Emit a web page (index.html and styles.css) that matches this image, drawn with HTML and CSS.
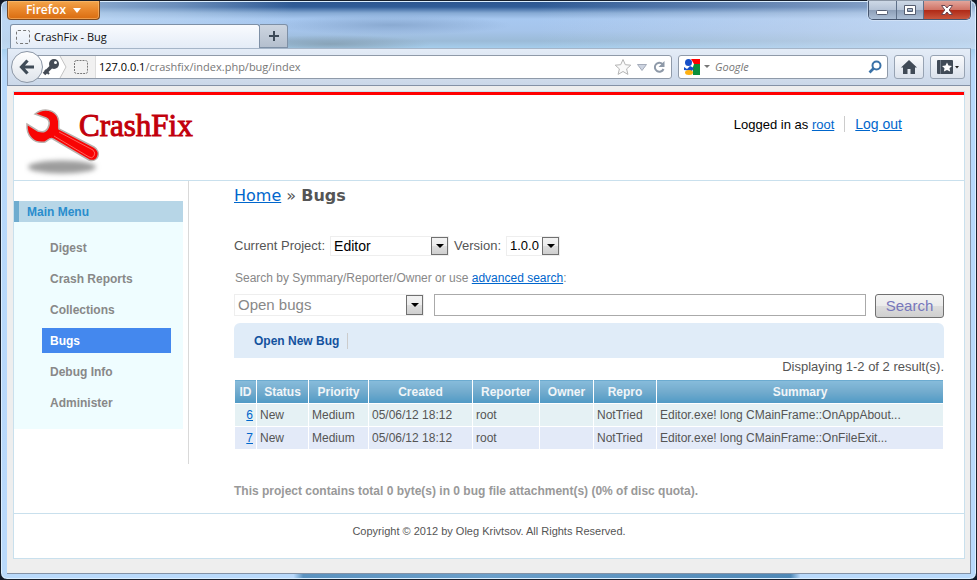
FILE: index.html
```html
<!DOCTYPE html>
<html lang="en">
<head>
<meta charset="utf-8">
<title>CrashFix - Bug</title>
<link rel="stylesheet" href="styles.css">
</head>
<body>
<div class="window">
  <div class="titlebar">
    <button class="firefox" type="button">Firefox <svg width="8" height="5" viewBox="0 0 8 5"><path d="M0 0h8L4 5z" fill="#fff"/></svg></button>
    <div class="controls">
      <button class="control" type="button" aria-label="Minimize"><svg width="14" height="12" viewBox="0 0 14 12"><rect x="1.500" y="6.500" width="11" height="4" rx="1" fill="#fff" stroke="#555d70"/></svg></button>
      <button class="control" type="button" aria-label="Maximize"><svg width="14" height="12" viewBox="0 0 14 12"><path d="M1.500 1.500h11v9h-11zM4.500 4.500v3h5v-3z" fill="#fff" stroke="#555d70" fill-rule="evenodd"/></svg></button>
      <button class="control close" type="button" aria-label="Close"><svg width="14" height="12" viewBox="0 0 14 12"><path d="M1.500 1.500h3.500l2 2.500 2-2.500h3.500L9.200 6l3.300 4.500H9L7 8l-2 2.500H1.500L4.800 6z" fill="#fff" stroke="#6b4650"/></svg></button>
    </div>
  </div>
  <div class="tabs">
    <div class="tab"><span class="blank-icon"></span><span>CrashFix - Bug</span></div>
    <button class="new-tab" type="button" aria-label="New tab"><svg width="12" height="12" viewBox="0 0 12 12"><path d="M6 1v10M1 6h10" stroke="#3d4a58" stroke-width="2"/></svg></button>
  </div>
  <div class="toolbar">
    <button class="back" type="button" aria-label="Back"><svg width="16" height="16" viewBox="0 0 16 16"><path d="M8.500 1.500L2.500 8l6 6.500M3 8h12" fill="none" stroke="#3f4b57" stroke-width="3.200"/></svg></button>
    <div class="urlbar">
      <svg class="identity" width="60" height="22" viewBox="0 0 60 22"><path d="M24 0h36v22H24l6-11z" fill="#f1f1f1"/><path d="M24 0l6 11-6 11" fill="none" stroke="#c4c4c4"/><path d="M59.500 0v22" stroke="#ddd"/><g stroke="#444b55"><path d="M16 10L8 18" stroke-width="3.500"/><path d="M9 14l4 4" stroke-width="2"/></g><circle cx="18" cy="8" r="5" fill="#444b55"/><circle cx="19.500" cy="6.500" r="1.500" fill="#fff"/><rect x="38.500" y="4.500" width="13" height="13" rx="2" fill="none" stroke="#777" stroke-dasharray="2 1"/></svg>
      <label class="host" for="url">127.0.0.1</label><input id="url" class="url" type="text" value="/crashfix/index.php/bug/index">
      <svg width="56" height="18" viewBox="0 0 56 18"><path d="M9 1.500l2.300 5.200 5.500.5-4.200 3.700 1.300 5.500L9 13.500l-4.900 2.900 1.300-5.500L1.200 7.200l5.500-.5z" fill="#fafafa" stroke="#b4b4b4"/><path d="M23.500 6.500h9l-4.500 6z" fill="#ccd3e0" stroke="#a5acba"/><path d="M48.500 6A4.500 4.500 0 1 0 49.500 11" fill="none" stroke="#8e99a8" stroke-width="2"/><path d="M50.500 3v6h-6z" fill="#8e99a8"/></svg>
    </div>
    <div class="searchbar">
      <svg width="28" height="18" viewBox="0 0 28 18"><path d="M8 1h9v5H11z" fill="#f00"/><path d="M11 6h6v11h-7V9z" fill="#0a8f3c"/><circle cx="5.500" cy="4.500" r="3.500" fill="#1650c8"/><path d="M1 9l3 2 3-3 4 2-2 3-8-1z" fill="#1650c8"/><ellipse cx="6" cy="14.500" rx="4" ry="2.500" fill="#ffb010"/><path d="M21 7h6l-3 3z" fill="#777"/></svg>
      <input class="web-search" type="text" placeholder="Google" aria-label="Google search">
      <svg width="14" height="14" viewBox="0 0 14 14"><circle cx="8.500" cy="5.500" r="4" fill="none" stroke="#3a72a8" stroke-width="2"/><path d="M5.500 8.500L1.500 12.500" stroke="#3a72a8" stroke-width="2.600"/></svg>
    </div>
    <button class="tool" type="button" aria-label="Home"><svg width="16" height="14" viewBox="0 0 16 14"><path d="M8 0L0 7.500h2V14h4.500V9h3v5H14V7.500h2z" fill="#414b57"/></svg></button>
    <button class="tool wide" type="button" aria-label="Bookmarks"><svg width="22" height="14" viewBox="0 0 22 14"><rect width="16" height="14" rx="1" fill="#414b57"/><path d="M3.500 0v14" stroke="#727c88"/><path d="M10 2.500l1.500 3 3.500.4-2.500 2.300.6 3.300-3.100-1.600-3.100 1.600.6-3.300L5 5.900l3.500-.4z" fill="#fff"/><path d="M18 6h4l-2 2.500z" fill="#222"/></svg></button>
  </div>

  <div class="viewport">
    <div class="page">
      <header class="header">
        <div class="logo">
          <svg class="wrench" width="80" height="76" viewBox="0 0 80 76">
            <defs><filter id="soft" x="-20%" y="-50%" width="140%" height="200%"><feGaussianBlur stdDeviation="2.500"/></filter></defs>
            <ellipse cx="38" cy="62" rx="34" ry="6.500" fill="#9c9c9c" filter="url(#soft)"/>
            <path d="M11 9C20 2 31 5 34 13C36 18 34 21 35 24L70 42C78 47 74 58 65 55L29 34C26 32 25 35 21 37C10 39 2 31 3 19L14 26Q23 29 25 20Q26 15 22 13Z" fill="#f80404" stroke="#b9b1ae" stroke-width="1.500"/>
            <path d="M35 27L69 45Q72 48 70 51Q68 54 65 52L30 31" fill="none" stroke="#ff7a70" stroke-width=".8"/>
          </svg>
          <span class="brand">CrashFix</span>
        </div>
        <div class="account"><span>Logged in as <a href="#root">root</a></span><a class="logout" href="#logout">Log out</a></div>
      </header>

      <div class="columns">
        <nav class="sidebar">
          <h2 class="menu-title">Main Menu</h2>
          <ul class="menu">
            <li><a href="#digest">Digest</a></li>
            <li><a href="#crash">Crash Reports</a></li>
            <li><a href="#collections">Collections</a></li>
            <li><a class="active" href="#bugs">Bugs</a></li>
            <li><a href="#debug">Debug Info</a></li>
            <li><a href="#admin">Administer</a></li>
          </ul>
        </nav>
        <main class="content">
          <div class="breadcrumbs"><a href="#home">Home</a> » <strong>Bugs</strong></div>
          <div class="project">
            <label for="project">Current Project:</label>
            <span class="select name"><select id="project"><option>Editor</option></select><i class="arrow"></i></span>
            <label for="version">Version:</label>
            <span class="select version"><select id="version"><option>1.0.0</option></select><i class="arrow"></i></span>
          </div>
          <div class="hint"><label for="query">Search by Symmary/Reporter/Owner or use</label> <a href="#advanced">advanced search</a>:</div>
          <form class="filter">
            <span class="select status"><select aria-label="Status"><option>Open bugs</option></select><i class="arrow"></i></span>
            <input id="query" class="query" type="text">
            <button class="submit" type="button">Search</button>
          </form>
          <div class="actions"><a href="#new">Open New Bug</a></div>
          <div class="summary">Displaying 1-2 of 2 result(s).</div>
          <table class="grid">
            <colgroup><col class="c-id"><col class="c-status"><col class="c-priority"><col class="c-created"><col class="c-reporter"><col class="c-owner"><col class="c-repro"><col></colgroup>
            <thead><tr><th>ID</th><th>Status</th><th>Priority</th><th>Created</th><th>Reporter</th><th>Owner</th><th>Repro</th><th>Summary</th></tr></thead>
            <tbody>
              <tr><td class="id"><a href="#6">6</a></td><td>New</td><td>Medium</td><td>05/06/12 18:12</td><td>root</td><td></td><td>NotTried</td><td>Editor.exe! long CMainFrame::OnAppAbout...</td></tr>
              <tr><td class="id"><a href="#7">7</a></td><td>New</td><td>Medium</td><td>05/06/12 18:12</td><td>root</td><td></td><td>NotTried</td><td>Editor.exe! long CMainFrame::OnFileExit...</td></tr>
            </tbody>
          </table>
          <p class="quota">This project contains total 0 byte(s) in 0 bug file attachment(s) (0% of disc quota).</p>
        </main>
      </div>
      <footer class="footer">Copyright © 2012 by Oleg Krivtsov. All Rights Reserved.</footer>
    </div>
  </div>
</div>
</body>
</html>
```
FILE: styles.css
```css
* { box-sizing: border-box; }
body { margin: 0; background: #101828; font: 12px/16px "Liberation Sans", sans-serif; color: #555; }
button, input, select { font: inherit; margin: 0; }
svg { display: block; flex: none; }
a { color: #06c; }

.window {
  display: flex; flex-direction: column; min-height: 100vh;
  padding: 0 5px 5px 6px; border: 1px solid #18202c; border-radius: 7px;
  box-shadow: inset 0 0 0 1px #dbeeff;
  background:
    linear-gradient(90deg, transparent 30%, #5b92bf 31%, #6b9fca 50%, #4f88b6 81%, transparent 82%) bottom / 100% 5px no-repeat,
    radial-gradient(ellipse 100px 9px at 330px 43px, #7d94a4aa, transparent),
    radial-gradient(ellipse 120px 10px at 390px 24px, #7c9cc4aa, transparent),
    linear-gradient(90deg, #c3dbf3cc 0, #c3dbf366 18%, transparent 30%, transparent 55%, #cfdcf066 82%, #cfe0f5aa) top / 100% 48px no-repeat,
    linear-gradient(#2d568f 0, #315d98 6px, #86aad4 12px, #a7c8f0 18px, #a5c4ea 30px, #9bbbd8 40px, #a7d0ef 48px, #b7d8fa 60px, #b9d9fb);
}

/* Browser frame */
.titlebar { display: flex; justify-content: space-between; align-items: flex-start; height: 23px; }
.firefox {
  display: flex; align-items: center; justify-content: center; gap: 7px; width: 93px; height: 19px; padding: 0;
  border: 1px solid #7c4a20; border-top: 0; border-radius: 0 0 4px 4px;
  background: linear-gradient(#f2a54c, #e9862a 50%, #d96c10); color: #fff;
  font: 600 12px/16px "Open Sans", sans-serif; box-shadow: inset 0 0 0 1px #ffc58088;
}
.controls { display: flex; width: 103px; height: 19px; border: 1px solid #46566f; border-top: 0; border-radius: 0 0 5px 5px; overflow: hidden; box-shadow: 0 0 0 1px #dceafa99; }
.control { display: flex; align-items: center; justify-content: center; flex: 27; padding: 0; border: 0; border-right: 1px solid #5d6f88; background: linear-gradient(#cdd8e6, #b5c3d6 48%, #8d9fb8 52%, #abbdd4); }
.control.close { flex: 46; border-right: 0; background: linear-gradient(#e2a59b, #d07466 48%, #b02a17 52%, #c8563d); }
.tabs { display: flex; align-items: stretch; height: 24px; padding-left: 3px; }
.tab {
  display: flex; align-items: center; gap: 4px; width: 250px; padding: 0 5px;
  border: 1px solid #7e90a6; border-bottom: 0; border-radius: 3px 3px 0 0;
  background: linear-gradient(#f9fbfe, #e4ecf7); color: #111; font: 11px/16px "Open Sans", sans-serif;
}
.blank-icon { width: 14px; height: 14px; border: 1px dashed #777; border-radius: 2px; }
.new-tab { display: flex; align-items: center; justify-content: center; width: 28px; padding: 0; border: 1px solid #7e90a6; border-left: 0; border-radius: 0 3px 0 0; background: linear-gradient(#cdd5e0, #b4bfce); }
.toolbar {
  display: flex; align-items: center; height: 37px; padding: 0 5px 0 3px;
  background: linear-gradient(#e4ecf7, #cbd8e9); border: 1px solid #8492a6; border-top-color: #a5b5c8; border-bottom: 0;
}
.back { z-index: 1; display: flex; align-items: center; justify-content: center; flex: none; width: 32px; height: 32px; padding: 0; border: 1px solid #8c97a6; border-radius: 50%; background: linear-gradient(#fff, #dfe4eb); }
.urlbar, .searchbar { display: flex; align-items: center; height: 24px; background: #fff; border: 1px solid #8f9aa9; border-radius: 3px; font: 11px/16px "Open Sans", sans-serif; }
.urlbar { flex: 1; min-width: 0; margin-left: -10px; padding: 0 1px 0 2px; }
.host { margin-left: 3px; color: #000; }
.url { flex: 1; min-width: 0; padding: 0; border: 0; outline: 0; background: none; color: #777; }
.searchbar { width: 210px; margin-left: 6px; padding: 0 5px 0 4px; gap: 4px; }
.web-search { flex: 1; min-width: 0; padding: 0; border: 0; background: none; font-style: italic; }
.web-search::placeholder { color: #777; opacity: 1; }
.tool { display: flex; align-items: center; justify-content: center; flex: none; width: 30px; height: 24px; margin-left: 6px; padding: 0; border: 1px solid #97a3b3; border-radius: 3px; background: linear-gradient(#f9fafc, #dbe2ec); }
.tool.wide { width: 35px; }

/* Site */
.viewport { flex: 1; padding: 5px 5px 14px 6px; background: #eee; border: 1px solid #8492a6; border-width: 1px 1px 1px 0; }
.page { background: #fff; border: 1px solid #c9e0ed; }
.header { display: flex; justify-content: space-between; height: 89px; border-top: 3px solid #f00; border-bottom: 1px solid #c9e0ed; }
.logo { display: flex; align-items: flex-start; padding: 10px 0 0 10px; }
.brand { margin: 4px 0 0 -25px; font: 31px/34px "Liberation Serif", serif; color: #c2000c; -webkit-text-stroke: 1px #c2000c; }
.account { display: flex; align-items: flex-start; gap: 10px; padding: 21px 62px 0 0; color: #000; font-size: 13px; line-height: 18px; }
.logout { padding-left: 10px; border-left: 1px solid #ccc; font-size: 14px; line-height: 16px; }

.columns { display: flex; align-items: flex-start; }
.sidebar { flex: none; width: 175px; padding: 20px 5px 35px 0; border-right: 1px solid #d9d9d9; }
.menu-title { margin: 0; padding: 3px 0 2px 8px; border-left: 5px solid #6faccf; background: #b7d6e7; color: #298dcd; font-size: 12px; line-height: 16px; }
.menu { display: flex; flex-direction: column; gap: 6px; margin: 0; padding: 13px 12px 14px 28px; list-style: none; background: #effdff; }
.menu a { display: block; padding: 5px 8px 4px; color: #888; font-weight: bold; text-decoration: none; }
.menu a.active { background: #48e; color: #fff; }

.content { flex: 1; min-width: 0; padding: 4px 20px 14px 45px; }
.breadcrumbs { font: 16px/22px "DejaVu Sans", sans-serif; }
.project { display: flex; align-items: center; gap: 5px; margin-top: 29px; font-size: 13px; line-height: 18px; }
.select { position: relative; display: flex; height: 20px; border: 1px solid #eee; }
.select select { width: 100%; appearance: none; border: 0; border-radius: 0; background: #fff; padding: 0 17px 0 3px; color: #000; font-size: 14px; }
.arrow { position: absolute; top: 0; right: 0; bottom: 0; display: flex; align-items: center; justify-content: center; width: 17px; border: 1px solid #707070; background: linear-gradient(#f2f2f2, #ececec 50%, #ddd 51%, #cfcfcf); pointer-events: none; }
.arrow::before { content: ""; border: 4px solid transparent; border-top-color: #000; border-bottom: 0; }
.select.name { width: 119px; }
.select.version { width: 54px; }
.select.version select { font-size: 13px; }
.hint { margin-top: 14px; padding-left: 1px; line-height: 16px; color: #888; }
.filter { display: flex; margin-top: 8px; align-items: flex-start; }
.select.status { width: 190px; height: 22px; }
.status select { color: #888; font-size: 15px; }
.query { flex: 1; min-width: 0; height: 22px; margin: 0 9px 0 10px; border: 1px solid #aaa; }
.submit { width: 69px; height: 24px; padding: 0; border: 1px solid #707070; border-radius: 3px; background: linear-gradient(#f3f3f3, #ebebeb 50%, #ddd 51%, #cfcfcf); color: #77b; font-size: 15px; }
.actions { margin-top: 5px; padding: 10px 20px 9px; border-radius: 6px 6px 0 0; background: #e0ecf8; }
.actions a { display: inline-block; padding-right: 8px; border-right: 1px solid #ccc; color: #14529e; font-weight: bold; text-decoration: none; }
.summary { font-size: 13px; line-height: 18px; text-align: right; }
.grid { width: 100%; margin-top: 3px; table-layout: fixed; border-collapse: collapse; }
.grid th, .grid td { height: 23px; padding: 3px; border: 1px solid #fff; text-align: left; line-height: 16px; }
.grid th { height: 24px; padding: 3px 0; text-align: center; color: #f0f5f8; background: linear-gradient(#88bcdb, #72abcd 50%, #4f9ac5); }
.grid tbody tr { background: #e5f1f4; }
.grid tbody tr:last-child { background: #e3eaf8; }
.grid .id { text-align: right; }
.c-id { width: 22px; } .c-status { width: 52px; } .c-priority { width: 60px; } .c-created { width: 104px; }
.c-reporter { width: 67px; } .c-owner { width: 54px; } .c-repro { width: 63px; }
.quota { margin: 33px 0 0; color: #999; font-weight: bold; }
.footer { padding: 9px 0 18px; border-top: 1px solid #c9e0ed; text-align: center; font-size: 11px; line-height: 17px; }
```
